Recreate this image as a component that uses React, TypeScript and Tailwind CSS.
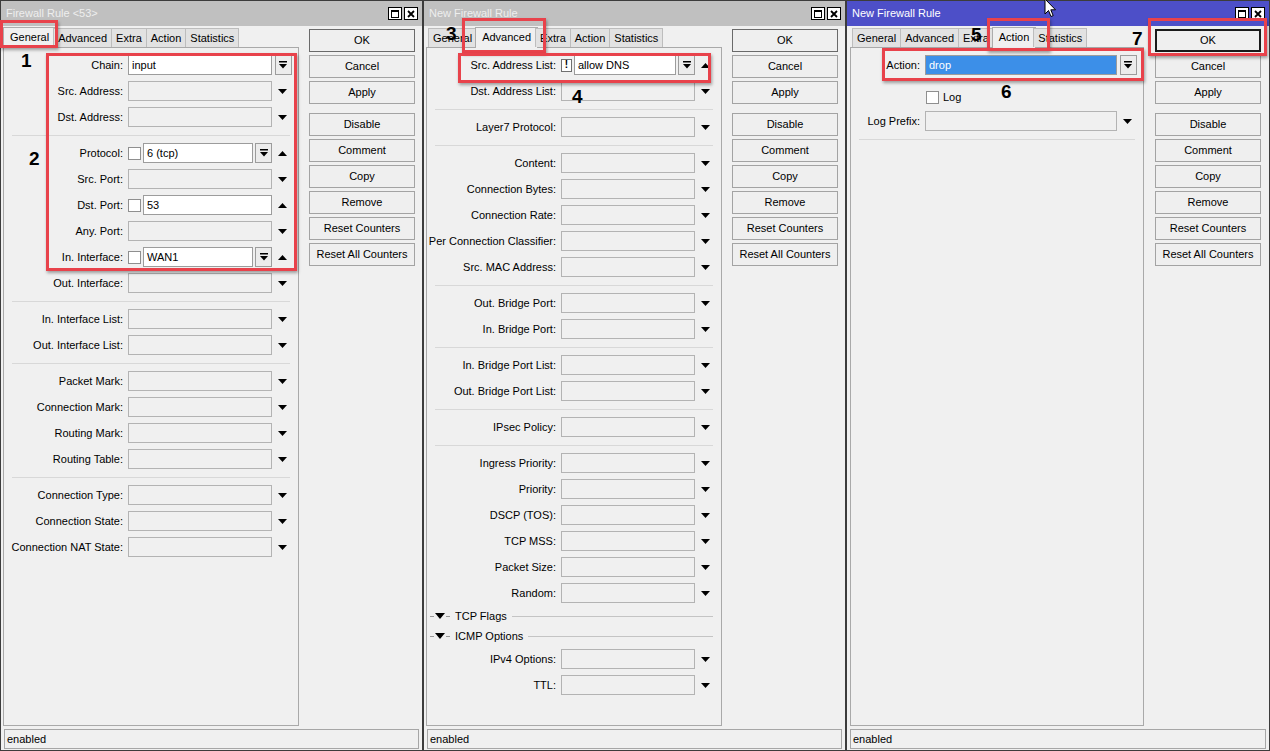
import type { ReactNode } from "react";

type Tail = "down" | "up" | "combo";

type Field = {
	label: string;
	value?: string;
	check?: boolean;
	neg?: boolean;
	combo?: boolean;
	tail?: Tail;
	selected?: boolean;
};

type Item = Field | "sep" | { section: string };

const generalRows: Item[] = [
	{ label: "Chain", value: "input", tail: "combo" },
	{ label: "Src. Address" },
	{ label: "Dst. Address" },
	"sep",
	{ label: "Protocol", check: true, value: "6 (tcp)", combo: true, tail: "up" },
	{ label: "Src. Port" },
	{ label: "Dst. Port", check: true, value: "53", tail: "up" },
	{ label: "Any. Port" },
	{ label: "In. Interface", check: true, value: "WAN1", combo: true, tail: "up" },
	{ label: "Out. Interface" },
	"sep",
	{ label: "In. Interface List" },
	{ label: "Out. Interface List" },
	"sep",
	{ label: "Packet Mark" },
	{ label: "Connection Mark" },
	{ label: "Routing Mark" },
	{ label: "Routing Table" },
	"sep",
	{ label: "Connection Type" },
	{ label: "Connection State" },
	{ label: "Connection NAT State" },
];

const advancedRows: Item[] = [
	{ label: "Src. Address List", neg: true, value: "allow DNS", combo: true, tail: "up" },
	{ label: "Dst. Address List" },
	"sep",
	{ label: "Layer7 Protocol" },
	"sep",
	{ label: "Content" },
	{ label: "Connection Bytes" },
	{ label: "Connection Rate" },
	{ label: "Per Connection Classifier" },
	{ label: "Src. MAC Address" },
	"sep",
	{ label: "Out. Bridge Port" },
	{ label: "In. Bridge Port" },
	"sep",
	{ label: "In. Bridge Port List" },
	{ label: "Out. Bridge Port List" },
	"sep",
	{ label: "IPsec Policy" },
	"sep",
	{ label: "Ingress Priority" },
	{ label: "Priority" },
	{ label: "DSCP (TOS)" },
	{ label: "TCP MSS" },
	{ label: "Packet Size" },
	{ label: "Random" },
	{ section: "TCP Flags" },
	{ section: "ICMP Options" },
	{ label: "IPv4 Options" },
	{ label: "TTL" },
];

const TABS = ["General", "Advanced", "Extra", "Action", "Statistics"];

function DownArrow() {
	return (
		<svg width="9" height="5" viewBox="0 0 9 5">
			<polygon points="0,0 9,0 4.5,5" fill="#000" />
		</svg>
	);
}

function UpArrow() {
	return (
		<svg width="9" height="5" viewBox="0 0 9 5">
			<polygon points="0,5 9,5 4.5,0" fill="#000" />
		</svg>
	);
}

function ComboButton() {
	return (
		<div className="flex h-[20px] w-[17px] shrink-0 items-center justify-center border border-[#9c9c9c] bg-[#ececec]">
			<svg width="8" height="8" viewBox="0 0 8 8">
				<rect x="0" y="0" width="8" height="1.5" fill="#000" />
				<polygon points="0,3 8,3 4,7.5" fill="#000" />
			</svg>
		</div>
	);
}

function CheckBox() {
	return <div className="h-[13px] w-[13px] shrink-0 border border-[#8f8f8f] bg-white" />;
}

function FieldRow({ f, labelW }: { f: Field; labelW: string }) {
	const filled = f.value !== undefined;
	const tail = f.tail ?? "down";
	return (
		<div className="flex h-[26px] items-center">
			<div className={`${labelW} shrink-0 whitespace-nowrap text-right`}>{f.label}:</div>
			<div className="ml-[5px] flex min-w-0 flex-1 items-center gap-[2px]">
				{f.check && <CheckBox />}
				{f.neg && (
					<div className="flex h-[13px] w-[11px] shrink-0 items-center justify-center border border-[#707070] bg-white text-[10px] font-bold leading-none">
						!
					</div>
				)}
				<div
					className={`h-[20px] min-w-0 flex-1 truncate border pl-[3px] leading-[18px] ${
						f.selected
							? "border-[#9c9c9c] bg-[#3c8fe8] text-white"
							: filled
								? "border-[#9c9c9c] bg-white"
								: "border-[#b3b3b3] bg-[#f0f0f0]"
					}`}
				>
					{f.value}
				</div>
				{f.combo && <ComboButton />}
			</div>
			<div className="flex w-[20px] shrink-0 items-center justify-center">
				{tail === "down" && <DownArrow />}
				{tail === "up" && <UpArrow />}
				{tail === "combo" && (
					<div className="ml-[2px]">
						<ComboButton />
					</div>
				)}
			</div>
			<div className="w-[6px] shrink-0" />
		</div>
	);
}

function Separator() {
	return (
		<div className="flex h-[10px] items-center px-[8px]">
			<div className="h-px flex-1 bg-[#d8d8d8]" />
		</div>
	);
}

function Section({ label }: { label: string }) {
	return (
		<div className="flex h-[20px] items-center pl-[3px] pr-[8px]">
			<div className="h-px w-[4px] bg-[#9a9a9a]" />
			<svg className="ml-[1px]" width="10" height="6" viewBox="0 0 10 6">
				<polygon points="0,0 10,0 5,6" fill="#000" />
			</svg>
			<div className="ml-[1px] h-px w-[4px] bg-[#9a9a9a]" />
			<span className="ml-[5px]">{label}</span>
			<div className="ml-[5px] h-px flex-1 bg-[#c4c4c4]" />
		</div>
	);
}

function renderItems(items: Item[], labelW: string) {
	return items.map((it, i) => {
		if (it === "sep") return <Separator key={i} />;
		if ("section" in it) return <Section key={i} label={it.section} />;
		return <FieldRow key={i} f={it} labelW={labelW} />;
	});
}

function Tabs({ selected }: { selected: string }) {
	return (
		<div className="relative z-10 flex h-[19px] items-end pl-[2px]">
			{TABS.map((t, i) =>
				t === selected ? (
					<div
						key={t}
						className="-mx-[2px] -mb-px h-[21px] border border-b-0 border-[#acacac] bg-[#f0f0f0] px-[6px] leading-[19px]"
					>
						{t}
					</div>
				) : (
					<div
						key={t}
						className={`h-[19px] border border-b-0 border-[#bdbdbd] bg-[#e2e2e2] px-[4px] leading-[18px] ${
							i > 0 ? "-ml-px" : ""
						}`}
					>
						{t}
					</div>
				),
			)}
		</div>
	);
}

const BUTTONS = ["OK", "Cancel", "Apply", "Disable", "Comment", "Copy", "Remove", "Reset Counters", "Reset All Counters"];

function Buttons({ okCls }: { okCls: string }) {
	return (
		<div className="flex w-[106px] shrink-0 flex-col pt-[1px]">
			{BUTTONS.map((b, i) => (
				<div
					key={b}
					className={`mb-[3px] flex h-[23px] items-center justify-center bg-[#efefef] ${
						i === 0 ? okCls : "border border-[#a3a3a3]"
					} ${i === 3 ? "mt-[6px]" : ""}`}
				>
					{b}
				</div>
			))}
		</div>
	);
}

function WinControls() {
	return (
		<div className="mr-[4px] flex gap-[2px]">
			<div className="flex h-[13px] w-[14px] items-center justify-center border border-black bg-white">
				<div className="h-[8px] w-[8px] border border-t-2 border-black" />
			</div>
			<div className="flex h-[13px] w-[14px] items-center justify-center border border-black bg-white">
				<svg width="8" height="8" viewBox="0 0 8 8">
					<path d="M1 1 L7 7 M7 1 L1 7" stroke="#000" strokeWidth="1.8" />
				</svg>
			</div>
		</div>
	);
}

function Window({
	title,
	active,
	selected,
	okCls,
	wide,
	children,
}: {
	title: string;
	active?: boolean;
	selected: string;
	okCls: string;
	wide?: boolean;
	children: ReactNode;
}) {
	return (
		<div
			className={`flex h-full shrink-0 flex-col border border-[#3c3c3c] bg-[#f0f0f0] ${
				wide ? "w-[424px]" : "w-[423px]"
			}`}
		>
			<div
				className={`flex h-[25px] shrink-0 items-center justify-between ${
					active ? "bg-[#4d4fc8] text-white" : "bg-[#c0c0c0] text-[#eeeeee]"
				}`}
			>
				<span className="pl-[5px] text-[11px]">{title}</span>
				<WinControls />
			</div>
			<div className={`flex min-h-0 flex-1 pt-[2px] ${wide ? "pl-[3px]" : "pl-[2px]"}`}>
				<div className={`flex shrink-0 flex-col ${wide ? "w-[294px]" : "w-[296px]"}`}>
					<Tabs selected={selected} />
					<div className="flex-1 border border-[#a9a9a9] bg-[#f0f0f0] pt-[4px]">{children}</div>
				</div>
				<div className={wide ? "ml-[11px]" : "ml-[10px]"}>
					<Buttons okCls={okCls} />
				</div>
			</div>
			<div className="mx-[3px] mb-[1px] mt-[3px] h-[20px] shrink-0 border border-[#a6a6a6] pl-[2px] leading-[18px]">
				enabled
			</div>
		</div>
	);
}

function RedBox({ cls }: { cls: string }) {
	return (
		<div
			className={`pointer-events-none absolute z-20 border-[3px] border-[#e8424b] shadow-[1px_2px_3px_rgba(0,0,0,0.35)] ${cls}`}
		/>
	);
}

function Num({ n, cls }: { n: string; cls: string }) {
	return <div className={`absolute z-20 text-[19px] font-bold leading-none text-black ${cls}`}>{n}</div>;
}

export default function App() {
	return (
		<div className="relative flex h-[751px] w-[1270px] overflow-hidden bg-[#f0f0f0] text-[11px] text-black [font-family:'Liberation_Sans',Arial,sans-serif]">
			<Window title="Firewall Rule <53>" selected="General" okCls="border border-[#6a6a6a]">
				{renderItems(generalRows, "w-[119px]")}
			</Window>
			<Window title="New Firewall Rule" selected="Advanced" okCls="border border-[#6a6a6a]">
				{renderItems(advancedRows, "w-[129px]")}
			</Window>
			<Window title="New Firewall Rule" active wide selected="Action" okCls="border-2 border-[#1a1a1a]">
				<FieldRow f={{ label: "Action", value: "drop", selected: true, tail: "combo" }} labelW="w-[69px]" />
				<div className="mt-[8px] flex h-[22px] items-center pl-[75px]">
					<CheckBox />
					<span className="ml-[4px]">Log</span>
				</div>
				<FieldRow f={{ label: "Log Prefix" }} labelW="w-[69px]" />
				<Separator />
			</Window>

			<RedBox cls="left-[0px] top-[20px] h-[28px] w-[58px]" />
			<RedBox cls="left-[46px] top-[53px] h-[218px] w-[251px]" />
			<RedBox cls="left-[462px] top-[18px] h-[35px] w-[84px]" />
			<RedBox cls="left-[458px] top-[53px] h-[30px] w-[253px]" />
			<RedBox cls="left-[987px] top-[18px] h-[33px] w-[63px]" />
			<RedBox cls="left-[882px] top-[48px] h-[33px] w-[262px]" />
			<RedBox cls="left-[1148px] top-[18px] h-[38px] w-[119px]" />

			<Num n="1" cls="left-[21px] top-[51px]" />
			<Num n="2" cls="left-[29px] top-[149px]" />
			<Num n="3" cls="left-[446px] top-[24px]" />
			<Num n="4" cls="left-[572px] top-[87px]" />
			<Num n="5" cls="left-[971px] top-[25px]" />
			<Num n="6" cls="left-[1001px] top-[82px]" />
			<Num n="7" cls="left-[1132px] top-[29px]" />

			<svg className="absolute left-[1044px] top-[-2px] z-20" width="13" height="20" viewBox="0 0 13 20">
				<path d="M1 1 L1 16 L4.5 12.5 L7 18.5 L9.2 17.6 L6.8 11.8 L11.5 11.8 Z" fill="#fff" stroke="#000" strokeWidth="1" />
			</svg>
		</div>
	);
}
